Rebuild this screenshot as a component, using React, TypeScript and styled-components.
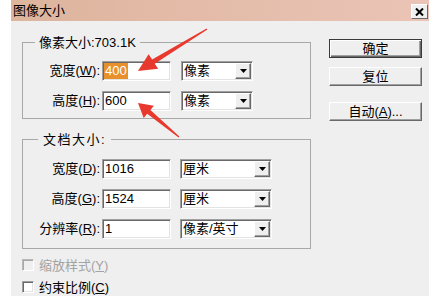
import React from "react";
import styled, { createGlobalStyle } from "styled-components";

const GlobalStyle = createGlobalStyle`
  html, body { margin: 0; padding: 0; background: #fff; }
  body {
    font-family: "Liberation Sans", "Noto Sans CJK SC", sans-serif;
    font-size: 13px;
    color: #000;
  }
  * { box-sizing: border-box; }
`;

const Page = styled.div`
  position: relative;
  width: 443px;
  height: 296px;
  overflow: hidden;
  background: #fff;
`;

const Dialog = styled.div`
  margin-left: 11px;
  width: 418px;
  height: 296px;
  background: #efefef;
  display: flex;
  flex-direction: column;
`;

const TitleBar = styled.div`
  height: 21px;
  flex: none;
  display: flex;
  align-items: flex-start;
  justify-content: space-between;
  padding: 0 1px 0 2px;
  background: linear-gradient(to right, #ddb49c, #ebc4b7);
`;

const Title = styled.span`
  font-size: 13px;
  line-height: 15px;
  margin-top: 3px;
`;

const CloseButton = styled.div`
  margin-top: 4px;
  width: 17px;
  height: 15px;
  background: #f0f0f0;
  border: 1px solid;
  border-color: #fff #696969 #696969 #fff;
  display: flex;
  align-items: center;
  justify-content: center;
`;

const Body = styled.div`
  display: flex;
  padding: 14px 0 0 11px;
`;

const LeftCol = styled.div`
  width: 289px;
  display: flex;
  flex-direction: column;
`;

const Group = styled.fieldset<{ $pt: number; $pb: number; $mt?: number }>`
  margin: ${(p) => p.$mt ?? 0}px 0 0 0;
  padding: ${(p) => p.$pt}px 0 ${(p) => p.$pb}px 0;
  border: 1px solid #a8a8a8;
  min-width: 0;
  display: flex;
  flex-direction: column;
  gap: 10px;
`;

const Legend = styled.legend<{ $ml: number; $pad: number; $ls?: number }>`
  margin-left: ${(p) => p.$ml}px;
  padding: 0 ${(p) => p.$pad}px;
  font-size: 13px;
  line-height: 15px;
  letter-spacing: ${(p) => p.$ls ?? 0}px;
`;

const Row = styled.div`
  display: flex;
  align-items: center;
  height: 20px;
`;

const Label = styled.span`
  width: 77px;
  margin-right: 2px;
  text-align: right;
  white-space: nowrap;
  line-height: 20px;
`;

const U = styled.span`
  text-decoration: underline;
`;

const sunken = `
  border: 1px solid;
  border-color: #a0a0a0 #fff #fff #a0a0a0;
  box-shadow: inset 1px 1px 0 #696969, inset -1px -1px 0 #e3e3e3;
  background: #fff;
`;

const TextBox = styled.div`
  ${sunken}
  width: 69px;
  height: 20px;
  padding-left: 2px;
  display: flex;
  align-items: center;
  line-height: 16px;
`;

const Selected = styled.span`
  background: #e8902c;
  color: #fff;
  padding: 0 1px;
  margin-left: -1px;
`;

const Select = styled.div<{ $w: number; $ml: number }>`
  ${sunken}
  margin-left: ${(p) => p.$ml}px;
  width: ${(p) => p.$w}px;
  height: 20px;
  display: flex;
  align-items: center;
  justify-content: space-between;
  padding-left: 2px;
  line-height: 16px;
`;

const DropButton = styled.div`
  width: 16px;
  height: 16px;
  margin-right: 1px;
  background: #efefef;
  border: 1px solid;
  border-color: #fff #696969 #696969 #fff;
  box-shadow: inset -1px -1px 0 #a0a0a0;
  display: flex;
  align-items: center;
  justify-content: center;
`;

const Checks = styled.div`
  margin-top: 7px;
  display: flex;
  flex-direction: column;
  gap: 5px;
`;

const CheckRow = styled.div<{ $disabled?: boolean }>`
  display: flex;
  align-items: center;
  gap: 5px;
  height: 17px;
  color: ${(p) => (p.$disabled ? "#a3a3a3" : "#000")};
`;

const CheckBox = styled.div<{ $disabled?: boolean }>`
  width: 12px;
  height: 12px;
  border: 1px solid;
  border-color: ${(p) =>
    p.$disabled ? "#b8b8b8 #fff #fff #b8b8b8" : "#a0a0a0 #fff #fff #a0a0a0"};
  box-shadow: ${(p) =>
    p.$disabled
      ? "inset 1px 1px 0 #a8a8a8"
      : "inset 1px 1px 0 #696969, inset -1px -1px 0 #e3e3e3"};
  background: ${(p) => (p.$disabled ? "#efefef" : "#fff")};
`;

const RightCol = styled.div`
  margin-left: 18px;
  margin-top: 4px;
  display: flex;
  flex-direction: column;
`;

const Button = styled.div<{ $default?: boolean; $mt?: number }>`
  margin-top: ${(p) => p.$mt ?? 0}px;
  width: 93px;
  height: 19px;
  background: #efefef;
  display: flex;
  align-items: center;
  justify-content: center;
  line-height: 15px;
  border: 1px solid;
  border-color: ${(p) => (p.$default ? "#3a3a3a" : "#fff #696969 #696969 #fff")};
  box-shadow: ${(p) =>
    p.$default
      ? "inset 1px 1px 0 #fff, inset -1px -1px 0 #696969, inset -2px -2px 0 #a0a0a0"
      : "inset -1px -1px 0 #a0a0a0"};
`;

const Overlay = styled.svg`
  position: absolute;
  left: 0;
  top: 0;
  pointer-events: none;
`;

const Triangle = () => (
  <svg width="7" height="4" viewBox="0 0 7 4">
    <path d="M0 0h7L3.5 4z" fill="#000" />
  </svg>
);

const CloseIcon = () => (
  <svg width="9" height="8" viewBox="0 0 9 8">
    <path d="M1 0.5L8 7.5M8 0.5L1 7.5" stroke="#000" strokeWidth="2" />
  </svg>
);

export default function App() {
  return (
    <Page>
      <GlobalStyle />
      <Dialog>
        <TitleBar>
          <Title>图像大小</Title>
          <CloseButton>
            <CloseIcon />
          </CloseButton>
        </TitleBar>
        <Body>
          <LeftCol>
            <Group $pt={11} $pb={7}>
              <Legend $ml={12} $pad={4}>像素大小:703.1K</Legend>
              <Row>
                <Label>
                  宽度(<U>W</U>):
                </Label>
                <TextBox>
                  <Selected>400</Selected>
                </TextBox>
                <Select $w={72} $ml={10}>
                  像素
                  <DropButton>
                    <Triangle />
                  </DropButton>
                </Select>
              </Row>
              <Row>
                <Label>
                  高度(<U>H</U>):
                </Label>
                <TextBox>600</TextBox>
                <Select $w={72} $ml={10}>
                  像素
                  <DropButton>
                    <Triangle />
                  </DropButton>
                </Select>
              </Row>
            </Group>
            <Group $pt={12} $pb={9} $mt={13}>
              <Legend $ml={15} $pad={5} $ls={1.5}>文档大小:</Legend>
              <Row>
                <Label>
                  宽度(<U>D</U>):
                </Label>
                <TextBox>1016</TextBox>
                <Select $w={92} $ml={9}>
                  厘米
                  <DropButton>
                    <Triangle />
                  </DropButton>
                </Select>
              </Row>
              <Row>
                <Label>
                  高度(<U>G</U>):
                </Label>
                <TextBox>1524</TextBox>
                <Select $w={92} $ml={9}>
                  厘米
                  <DropButton>
                    <Triangle />
                  </DropButton>
                </Select>
              </Row>
              <Row>
                <Label>
                  分辨率(<U>R</U>):
                </Label>
                <TextBox>1</TextBox>
                <Select $w={92} $ml={9}>
                  像素/英寸
                  <DropButton>
                    <Triangle />
                  </DropButton>
                </Select>
              </Row>
            </Group>
            <Checks>
              <CheckRow $disabled>
                <CheckBox $disabled />
                <span>
                  缩放样式(<U>Y</U>)
                </span>
              </CheckRow>
              <CheckRow>
                <CheckBox />
                <span>
                  约束比例(<U>C</U>)
                </span>
              </CheckRow>
            </Checks>
          </LeftCol>
          <RightCol>
            <Button $default>确定</Button>
            <Button $mt={9}>复位</Button>
            <Button $mt={16}>
              自动(<U>A</U>)...
            </Button>
          </RightCol>
        </Body>
      </Dialog>
      <Overlay width="443" height="296" viewBox="0 0 443 296">
        <polygon
          points="206.6,28.4 152.1,59.5 148.6,54.2 138,71 158.2,68.8 154.7,63.7 207.4,29.6"
          fill="#e8392e"
        />
        <polygon
          points="179.4,136.5 150.4,110.0 153.9,105.7 138,103 143.7,118.1 147.2,113.8 178.6,137.5"
          fill="#e8392e"
        />
      </Overlay>
    </Page>
  );
}
